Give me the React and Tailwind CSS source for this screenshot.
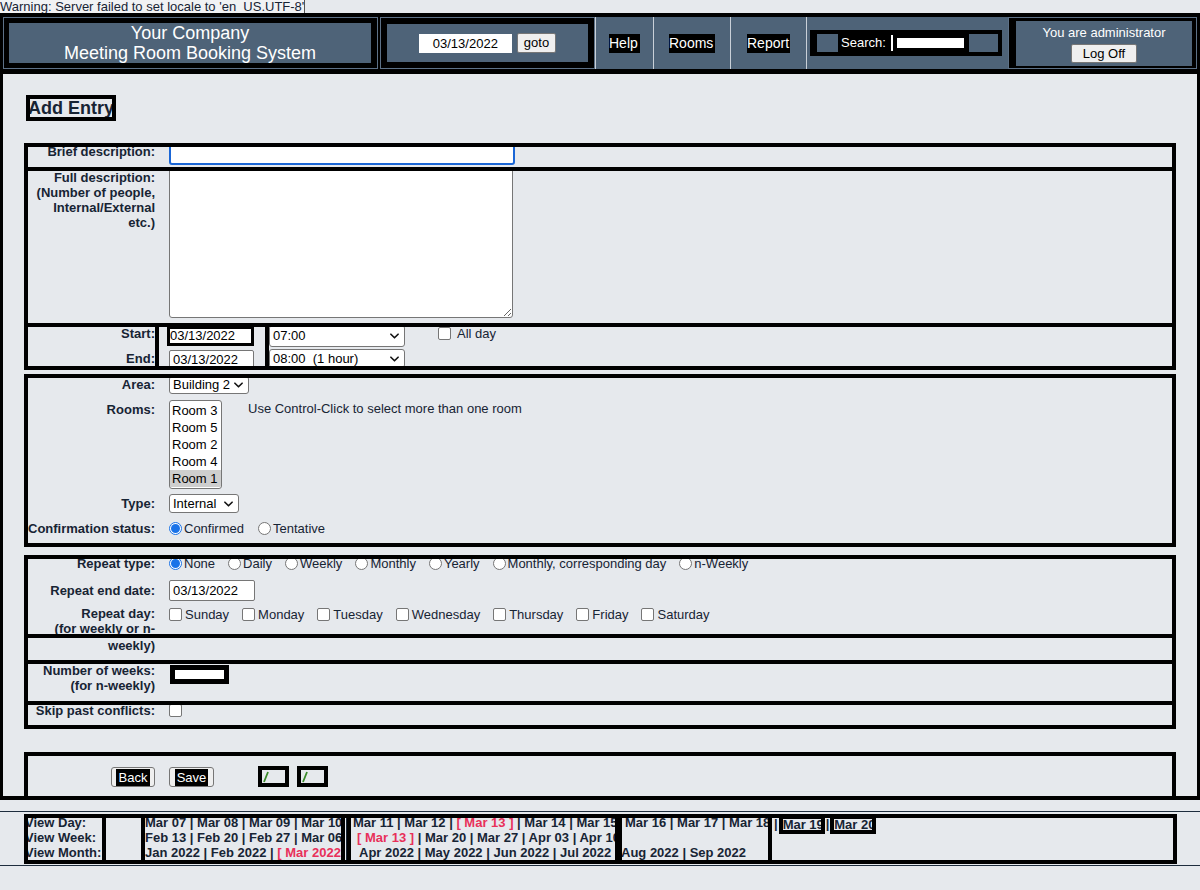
import React from 'react';

// colours picked off the screenshot
const SLATE = 'bg-[#4e6378]';

function Chevron() {
  return (
    <svg viewBox="0 0 10 6" className="w-[9px] h-[6px] shrink-0" fill="none" stroke="#111" strokeWidth="1.8" strokeLinecap="round" strokeLinejoin="round">
      <path d="M1 1l4 4 4-4" />
    </svg>
  );
}

function Select({ value, className = '' }) {
  return (
    <div className={`flex items-center justify-between bg-white border border-[#767676] rounded-[3px] pl-[3px] pr-[5px] text-[13px] text-black ${className}`}>
      <span className="whitespace-pre">{value}</span>
      <Chevron />
    </div>
  );
}

function Radio({ checked }) {
  if (checked) {
    return (
      <span className="w-[13px] h-[13px] shrink-0 rounded-full border border-[#1a73e8] bg-white flex items-center justify-center">
        <span className="w-[9px] h-[9px] rounded-full bg-[#1a73e8]" />
      </span>
    );
  }
  return <span className="block w-[13px] h-[13px] shrink-0 rounded-full border border-[#767676] bg-white" />;
}

function Checkbox({ className = '' }) {
  return <span className={`block w-[13px] h-[13px] shrink-0 rounded-[2px] border border-[#767676] bg-white ${className}`} />;
}

function Label({ children, className = '' }) {
  return (
    <div className={`w-[127px] shrink-0 text-right font-bold text-[13px] leading-[15px] whitespace-nowrap ${className}`}>
      {children}
    </div>
  );
}

function NavCell({ label, width, boxWidth }) {
  return (
    <div className={`${width} h-[52px] ${SLATE} border-l border-[#c9d0d8] flex items-center justify-center`}>
      <div className={`${boxWidth} h-[19px] bg-black text-white text-[14px] leading-[19px] overflow-hidden whitespace-nowrap`}>
        {label}
      </div>
    </div>
  );
}

function BrokenImage() {
  return (
    <div className="w-[31px] h-[21px] border-[4px] border-black bg-[#e6e9ed] flex items-center pl-[1px]">
      <svg viewBox="0 0 6 12" className="w-[6px] h-[12px]" fill="none" stroke="#3a8a2a" strokeWidth="1.8">
        <path d="M1 11L5 1" />
      </svg>
    </div>
  );
}

const days = ['Sunday', 'Monday', 'Tuesday', 'Wednesday', 'Thursday', 'Friday', 'Saturday'];
const repeatTypes = ['None', 'Daily', 'Weekly', 'Monthly', 'Yearly', 'Monthly, corresponding day', 'n-Weekly'];
const rooms = ['Room 3', 'Room 5', 'Room 2', 'Room 4', 'Room 1'];

const Red = ({ children }) => <span className="text-[#e8305a]">{children}</span>;

export default function App() {
  return (
    <div className="w-[1200px] min-h-[890px] bg-[#e6e9ed] text-[#172434] font-['Liberation_Sans',Arial,sans-serif]">
      {/* locale warning */}
      <div className="h-[13px] text-[13px] leading-[13px] whitespace-nowrap overflow-hidden">
        <span className="bg-[#f1f2f4] border-r border-[#555]">Warning: Server failed to set locale to 'en_US.UTF-8'</span>
      </div>

      {/* header banner */}
      <div className="flex h-[61px] bg-black pt-[4px] pl-[3px]">
        <div className="w-[375px] h-[52px] border border-[#5d7187] p-[5px] pr-[6px]">
          <div className={`h-full ${SLATE} flex flex-col items-center justify-center text-white text-[18px] leading-[20px]`}>
            <div>Your Company</div>
            <div>Meeting Room Booking System</div>
          </div>
        </div>
        <div className="w-[2px]" />
        <div className="w-[215px] h-[52px] border border-[#5d7187] p-[6px]">
          <div className={`h-full ${SLATE} flex items-center justify-center gap-[5px]`}>
            <div className="w-[93px] h-[19px] bg-white text-[13px] leading-[19px] text-center text-black">03/13/2022</div>
            <div className="h-[20px] px-[6px] bg-[#efefef] border border-[#767676] rounded-[2px] text-[13px] leading-[18px] text-black">goto</div>
          </div>
        </div>
        <NavCell label="Help" width="w-[58px]" boxWidth="w-[31px]" />
        <NavCell label="Rooms" width="w-[77px]" boxWidth="w-[46px]" />
        <NavCell label="Report" width="w-[76px]" boxWidth="w-[43px]" />
        <div className={`w-[202px] h-[52px] ${SLATE} border-l border-[#c9d0d8] flex items-center pl-[3px]`}>
          <div className="w-[192px] h-[26px] bg-black flex items-center pl-[7px]">
            <div className={`w-[21px] h-[18px] ${SLATE}`} />
            <div className="ml-[3px] text-white text-[13px] leading-[14px]">Search:</div>
            <div className="ml-[5px] w-[2px] h-[16px] bg-white" />
            <div className="ml-[4px] w-[67px] h-[10px] bg-white" />
            <div className={`ml-[5px] w-[29px] h-[18px] ${SLATE}`} />
          </div>
        </div>
        <div className="w-[189px] h-[52px] border border-[#5d7187] pt-[3px] pb-[2px] pl-[7px] pr-[4px]">
          <div className={`h-full ${SLATE} flex flex-col items-center pt-[4px]`}>
            <div className="text-white text-[13px] leading-[15px]">You are administrator</div>
            <div className="mt-[4px] w-[66px] h-[19px] bg-[#efefef] border border-[#767676] rounded-[2px] text-[13px] leading-[17px] text-black text-center">Log Off</div>
          </div>
        </div>
      </div>

      {/* main area */}
      <div className="h-[726px] pt-[21px] border-l-[3px] border-r-[3px] border-b-[4px] border-black">
        <div className="ml-[23px] w-[90px] h-[26px] border-[4px] border-black overflow-hidden">
          <div className="-ml-[2px] text-[18px] leading-[18px] font-bold whitespace-nowrap">Add Entry</div>
        </div>

        {/* description + times */}
        <div className="ml-[21px] mt-[22px] w-[1152px] border-[4px] border-black">
          <div className="h-[20px] flex overflow-hidden">
            <Label className="leading-[14px] -mt-[3px]">Brief description:</Label>
            <div className="ml-[14px] -mt-[3px] w-[346px] h-[21px] bg-white border-[2px] border-[#1a66d6] rounded-[3px]" />
          </div>
          <div className="h-[156px] border-t-[4px] border-black flex overflow-hidden">
            <Label className="-mt-[1px]">
              Full description:<br />(Number of people,<br />Internal/External<br />etc.)
            </Label>
            <textarea
              readOnly
              className="ml-[14px] -mt-[2px] w-[344px] h-[149px] bg-white border border-[#767676] rounded-b-[3px] resize"
            />
          </div>
          <div className="h-[43px] border-t-[4px] border-black flex items-stretch overflow-hidden">
            <Label className="leading-[14px] -mt-[1px]">
              Start:
              <div className="mt-[10px]">End:</div>
            </Label>
            <div className="w-[4px] bg-black shrink-0" />
            <div className="w-[8px] shrink-0" />
            <div className="w-[87px] shrink-0">
              <div className="-mt-[1px] h-[20px] border-[3px] border-black bg-white text-[13px] leading-[14px] text-black overflow-hidden whitespace-nowrap">
                <span className="inline-block">03/13/2022</span>
              </div>
              <div className="mt-[4px] ml-[2px] w-[85px] h-[19px] border border-[#767676] rounded-[2px] bg-white text-[13px] leading-[17px] text-black px-[3px]">03/13/2022</div>
            </div>
            <div className="w-[11px] shrink-0" />
            <div className="w-[4px] bg-black shrink-0" />
            <div className="w-[136px] shrink-0">
              <Select value="07:00" className="-mt-[2px] h-[22px]" />
              <Select value="08:00  (1 hour)" className="mt-[2px] h-[19px]" />
            </div>
            <div className="ml-[33px] flex items-start gap-[6px] text-[13px] leading-[14px]">
              <Checkbox />
              <span>All day</span>
            </div>
          </div>
        </div>

        {/* area / rooms / type */}
        <div className="ml-[21px] mt-[4px] w-[1152px] h-[173px] border-[4px] border-black overflow-hidden">
          <div className="flex">
            <Label className="leading-[14px] -mt-[1px]">Area:</Label>
            <Select value="Building 2" className="ml-[14px] -mt-[2px] w-[80px] h-[18px]" />
          </div>
          <div className="flex mt-[6px]">
            <Label className="leading-[14px] pt-[2px]">Rooms:</Label>
            <div className="ml-[14px] w-[53px] h-[89px] border border-[#767676] rounded-[3px] bg-white pt-[1px] overflow-hidden">
              {rooms.map((r, i) => (
                <div
                  key={r}
                  className={`h-[17px] pl-[2px] text-[13px] leading-[17px] text-black ${i === rooms.length - 1 ? 'bg-[#cecece]' : ''}`}
                >
                  {r}
                </div>
              ))}
            </div>
            <div className="ml-[26px] pt-[2px] text-[13px] leading-[14px]">Use Control-Click to select more than one room</div>
          </div>
          <div className="flex mt-[5px]">
            <Label className="leading-[14px] pt-[2px]">Type:</Label>
            <Select value="Internal" className="ml-[14px] w-[70px] h-[19px]" />
          </div>
          <div className="flex items-center mt-[8px]">
            <Label className="leading-[14px]">Confirmation status:</Label>
            <div className="ml-[14px] flex items-center text-[13px] leading-[14px]">
              <Radio checked />
              <span className="ml-[2px]">Confirmed</span>
              <div className="ml-[14px]"><Radio /></div>
              <span className="ml-[2px]">Tentative</span>
            </div>
          </div>
        </div>

        {/* repeat */}
        <div className="ml-[21px] mt-[8px] w-[1152px] border-[4px] border-black">
          <div className="h-[75px] overflow-hidden">
            <div className="flex items-center -mt-[3px]">
              <Label className="leading-[14px]">Repeat type:</Label>
              <div className="ml-[14px] flex items-center text-[13px] leading-[14px] whitespace-nowrap">
                {repeatTypes.map((t, i) => (
                  <div key={t} className={`flex items-center ${i ? 'ml-[13px]' : ''}`}>
                    <Radio checked={i === 0} />
                    <span className="ml-[2px]">{t}</span>
                  </div>
                ))}
              </div>
            </div>
            <div className="flex items-center mt-[9px]">
              <Label className="leading-[14px]">Repeat end date:</Label>
              <div className="ml-[14px] w-[86px] h-[21px] border border-[#767676] rounded-[2px] bg-white text-[13px] leading-[19px] text-black px-[3px]">03/13/2022</div>
            </div>
            <div className="flex items-start mt-[5px]">
              <Label>
                Repeat day:<br />(for weekly or n-
              </Label>
              <div className="ml-[14px] mt-[1px] flex items-center text-[13px] leading-[15px] whitespace-nowrap">
                {days.map((d, i) => (
                  <div key={d} className={`flex items-center ${i ? 'ml-[13px]' : ''}`}>
                    <Checkbox />
                    <span className="ml-[3px]">{d}</span>
                  </div>
                ))}
              </div>
            </div>
          </div>
          <div className="h-[26px] border-t-[4px] border-black">
            <Label>weekly)</Label>
          </div>
          <div className="h-[41px] border-t-[4px] border-black flex overflow-hidden">
            <Label className="-mt-[1px]">
              Number of weeks:<br />(for n-weekly)
            </Label>
            <div className="ml-[15px] mt-[1px] w-[59px] h-[19px] border-[5px] border-black bg-white" />
          </div>
          <div className="h-[24px] border-t-[4px] border-black flex overflow-hidden">
            <Label className="-mt-[2px]">Skip past conflicts:</Label>
            <Checkbox className="ml-[14px] -mt-[1px]" />
          </div>
        </div>

        {/* buttons */}
        <div className="ml-[21px] mt-[23px] w-[1152px] h-[44px] border-[4px] border-b-0 border-black flex items-start pt-[11px]">
          <div className="ml-[83px] w-[44px] h-[20px] bg-[#efefef] border border-[#767676] rounded-[3px] flex items-center justify-center">
            <div className="w-[34px] h-[17px] bg-black text-white text-[13px] leading-[17px] text-center overflow-hidden">Back</div>
          </div>
          <div className="ml-[14px] w-[45px] h-[20px] bg-[#efefef] border border-[#767676] rounded-[3px] flex items-center justify-center">
            <div className="w-[33px] h-[17px] bg-black text-white text-[13px] leading-[17px] text-center overflow-hidden">Save</div>
          </div>
          <div className="ml-[44px] -mt-[1px] flex gap-[8px]">
            <BrokenImage />
            <BrokenImage />
          </div>
        </div>
      </div>

      {/* date navigation footer */}
      <div className="mt-[11px] h-[1px] bg-[#1e2d3d]" />
      <div className="ml-[24px] mt-[2px] w-[1153px] h-[50px] border-[4px] border-black flex font-bold text-[13px] leading-[15px] overflow-hidden whitespace-nowrap">
        <div className="w-[74px] shrink-0 -mt-[3px] overflow-hidden">
          <div className="-ml-[3px]">View Day:</div>
          <div className="-ml-[3px]">View Week:</div>
          <div className="-ml-[3px]">View Month:</div>
        </div>
        <div className="w-[4px] bg-black shrink-0" />
        <div className="w-[35px] shrink-0" />
        <div className="w-[4px] bg-black shrink-0" />
        <div className="w-[196px] shrink-0 -mt-[3px] overflow-hidden">
          <div>Mar 07 | Mar 08 | Mar 09 | Mar 10</div>
          <div>Feb 13 | Feb 20 | Feb 27 | Mar 06</div>
          <div>Jan 2022 | Feb 2022 | <Red>[ Mar 2022 ]</Red></div>
        </div>
        <div className="w-[4px] bg-black shrink-0" />
        <div className="w-[2px] shrink-0 flex justify-center"><div className="w-[1px] bg-[#172434]" /></div>
        <div className="w-[4px] bg-black shrink-0" />
        <div className="w-[264px] shrink-0 -mt-[3px] overflow-hidden">
          <div className="pl-[2px]">Mar 11 | Mar 12 | <Red>[ Mar 13 ]</Red> | Mar 14 | Mar 15</div>
          <div className="pl-[6px]"><Red>[ Mar 13 ]</Red> | Mar 20 | Mar 27 | Apr 03 | Apr 10</div>
          <div className="pl-[8px]">Apr 2022 | May 2022 | Jun 2022 | Jul 2022</div>
        </div>
        <div className="w-[7px] bg-black shrink-0" />
        <div className="w-[146px] shrink-0 -mt-[3px] overflow-hidden">
          <div className="pl-[3px]">Mar 16 | Mar 17 | Mar 18</div>
          <div>&nbsp;</div>
          <div className="-ml-[1px]">Aug 2022 | Sep 2022</div>
        </div>
        <div className="w-[4px] bg-black shrink-0" />
        <div className="flex-1 -mt-[3px] flex items-start">
          <span className="ml-[2px] mt-[1px]">|</span>
          <div className="ml-[1px] w-[46px] h-[19px] border-[4px] border-black leading-[11px] overflow-hidden">Mar 19</div>
          <span className="ml-[1px] mt-[1px]">|</span>
          <div className="ml-[1px] w-[46px] h-[19px] border-[4px] border-black leading-[11px] overflow-hidden">Mar 20</div>
        </div>
      </div>
      <div className="mt-[1px] h-[1px] bg-[#1e2d3d]" />
    </div>
  );
}
